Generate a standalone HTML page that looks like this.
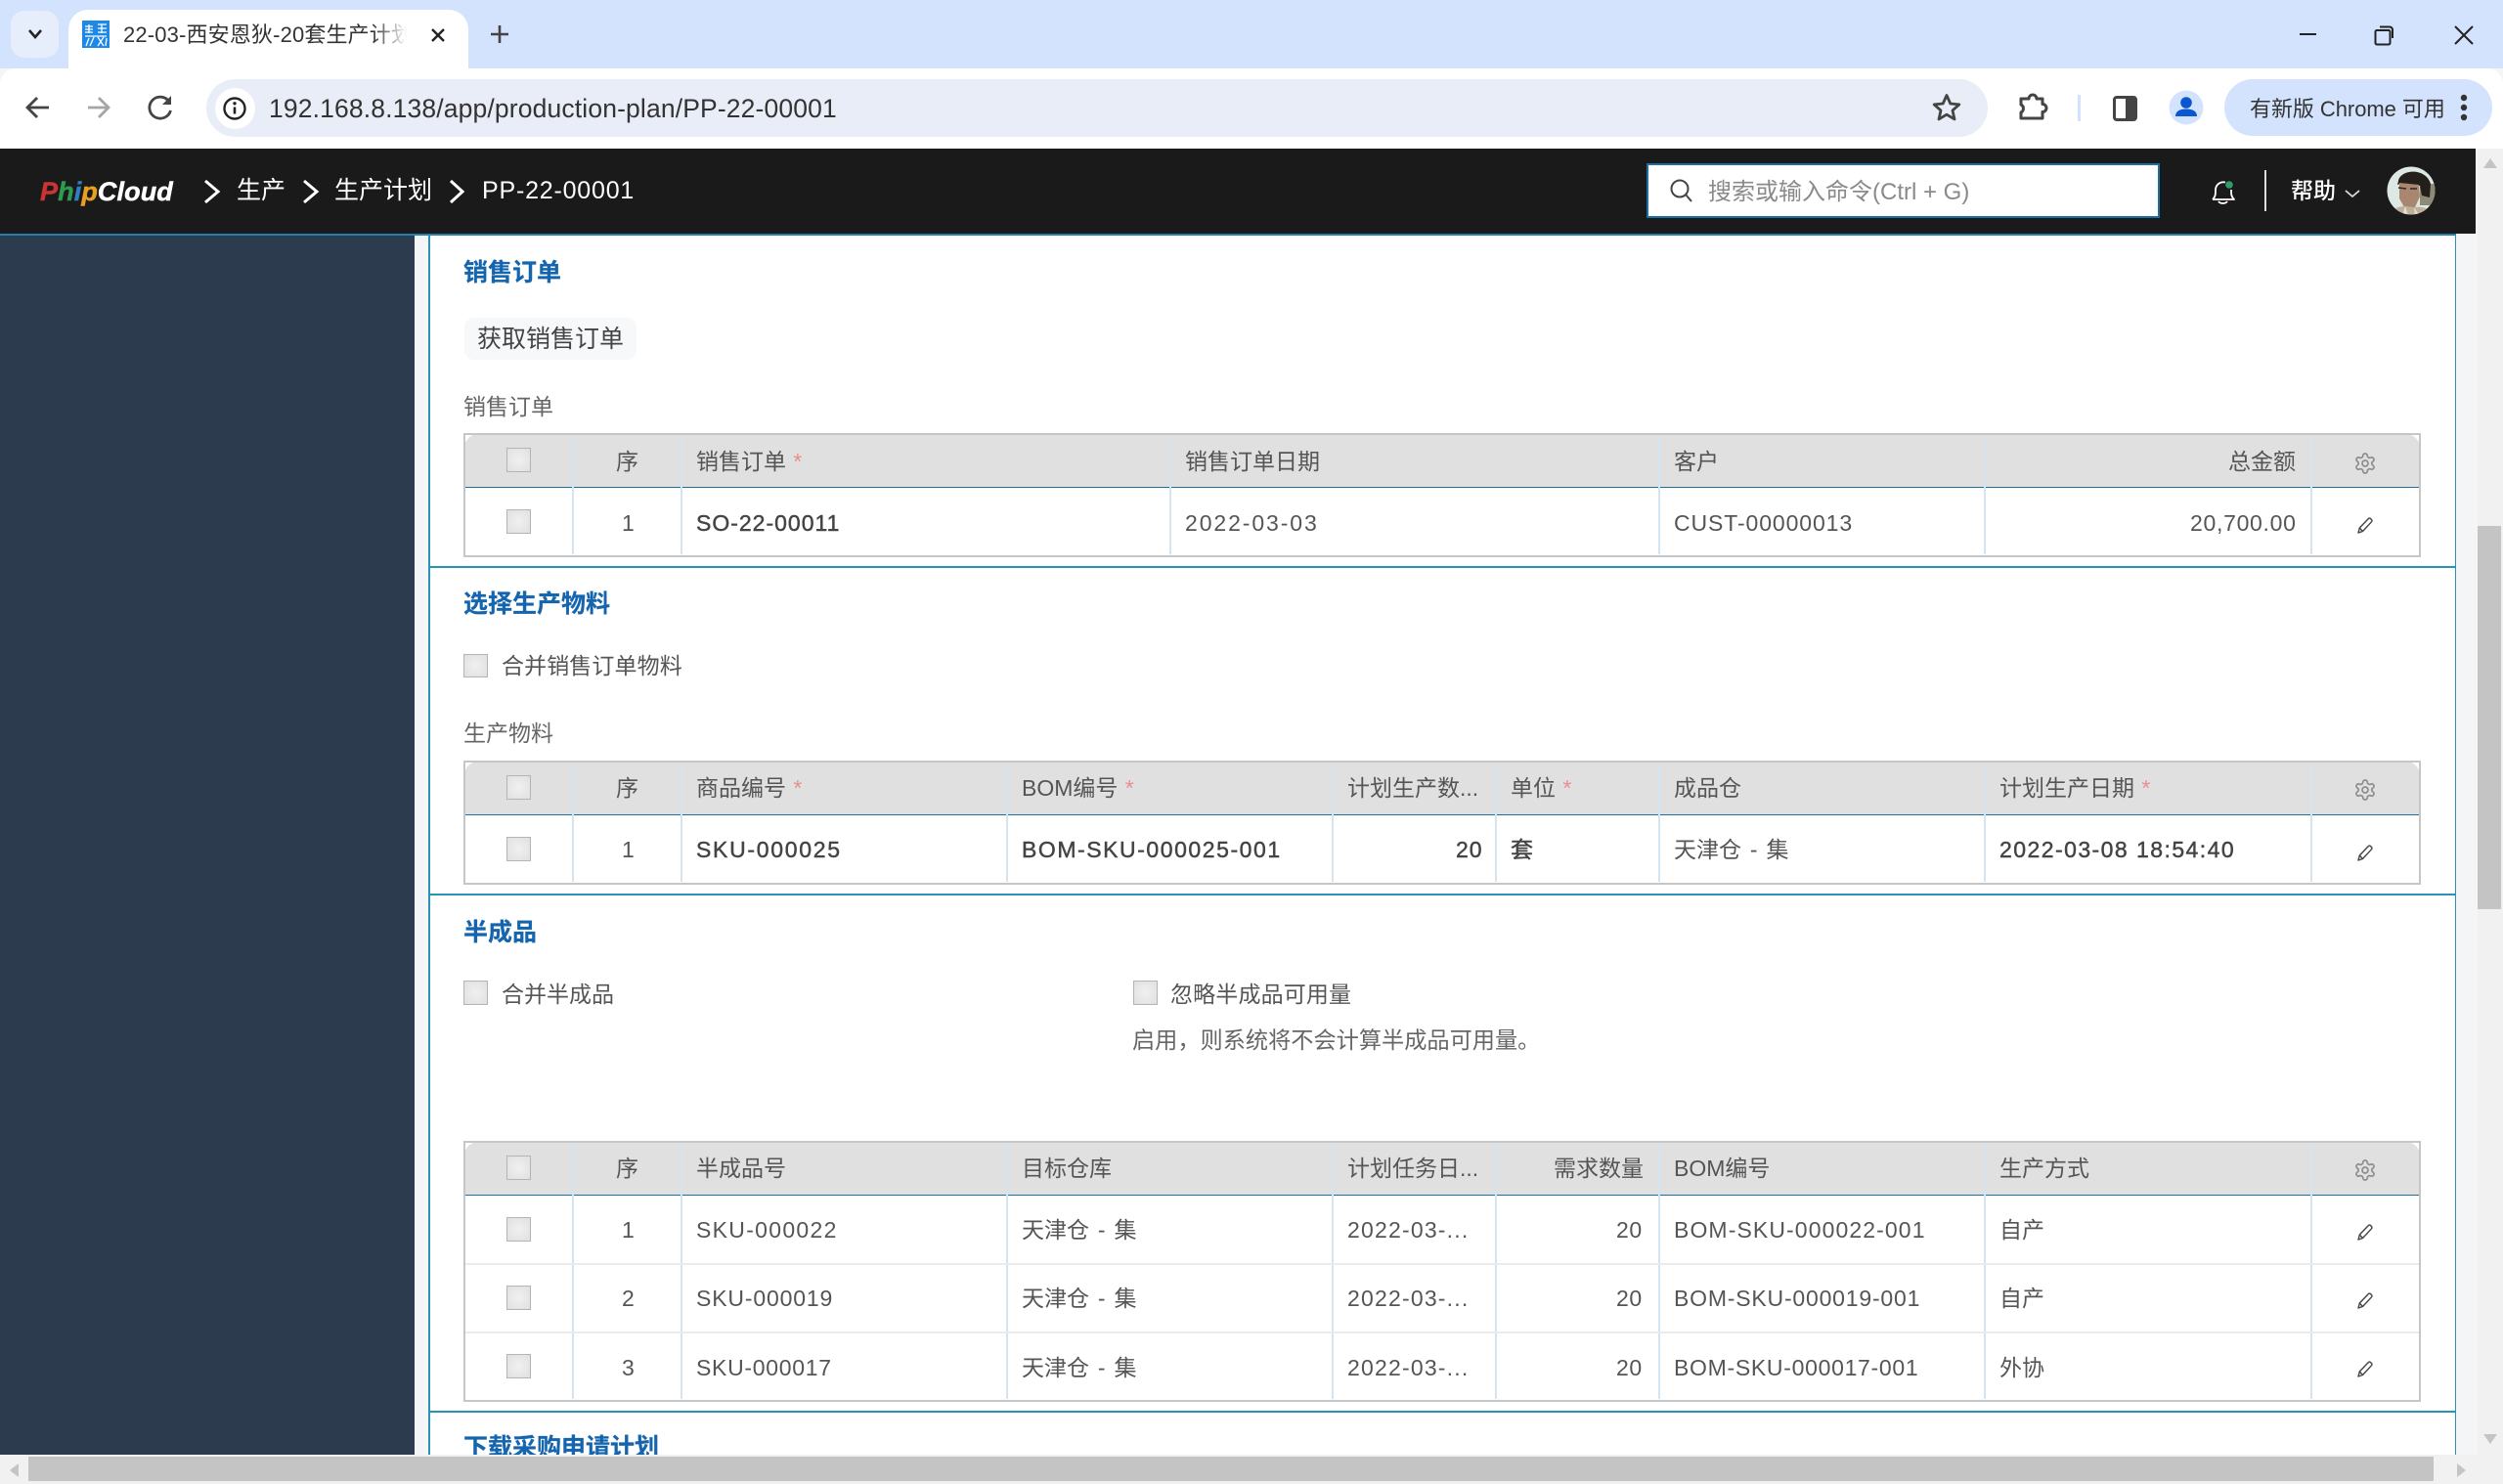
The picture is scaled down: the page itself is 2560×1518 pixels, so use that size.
<!DOCTYPE html>
<html><head><meta charset="utf-8">
<style>
html,body{margin:0;padding:0}
body{width:2560px;height:1518px;position:relative;overflow:hidden;background:#f4f5f6;font-family:"Liberation Sans","Noto Sans CJK SC",sans-serif;color:#555}
div,span,svg{position:absolute}
span{white-space:nowrap}
.ln{height:1.5px;left:438px;width:2074px;background:#2b92b5}
.h{left:474px;font-size:25px;font-weight:700;color:#1565ae;line-height:40px;height:40px;-webkit-text-stroke:.2px #1565ae}
.lb{font-size:23px;color:#666;line-height:40px;height:40px}
.cb{width:25px;height:25px;box-sizing:border-box;border:1.5px solid #b4b4b4;background:radial-gradient(circle,#f0f0f0,#e0e0e0)}
.tb{left:474px;width:2002px}
.tb:after{content:"";position:absolute;left:0;top:0;right:0;bottom:0;border:2px solid #c6c6c6;box-sizing:border-box}
.hd{left:1px;right:1px;top:1px;height:54px;background:#e0e0e0;border-radius:14px 14px 0 0;border-bottom:1.5px solid #1f6f9f}
.v{width:1.5px;top:1px;bottom:3px;background:#d3e4f3}
.r{left:1px;width:2001px;font-size:23px;color:#555;letter-spacing:0}
.r span{top:0}
.rl{left:2px;width:1998px;height:2px;background:#ebebeb}
.l{letter-spacing:1px}
.b{-webkit-text-stroke:.45px #444;color:#444}
.s{color:#e98e8e}
.g{width:24px;height:24px;left:1932px}
.p{width:16px;height:17px;left:1936px}
.ck{left:43px}
.w{word-spacing:2.5px}
</style></head><body>
<svg width="0" height="0" style="position:absolute">
<symbol id="gear" viewBox="0 0 24 24"><path fill="none" stroke="#8d8d8d" stroke-width="1.7" d="M12.22 2h-.44a2 2 0 0 0-2 2v.18a2 2 0 0 1-1 1.73l-.43.25a2 2 0 0 1-2 0l-.15-.08a2 2 0 0 0-2.73.73l-.22.38a2 2 0 0 0 .73 2.73l.15.1a2 2 0 0 1 1 1.72v.51a2 2 0 0 1-1 1.74l-.15.09a2 2 0 0 0-.73 2.73l.22.38a2 2 0 0 0 2.73.73l.15-.08a2 2 0 0 1 2 0l.43.25a2 2 0 0 1 1 1.73V20a2 2 0 0 0 2 2h.44a2 2 0 0 0 2-2v-.18a2 2 0 0 1 1-1.73l.43-.25a2 2 0 0 1 2 0l.15.08a2 2 0 0 0 2.73-.73l.22-.39a2 2 0 0 0-.73-2.73l-.15-.08a2 2 0 0 1-1-1.74v-.5a2 2 0 0 1 1-1.74l.15-.09a2 2 0 0 0 .73-2.73l-.22-.38a2 2 0 0 0-2.73-.73l-.15.08a2 2 0 0 1-2 0l-.43-.25a2 2 0 0 1-1-1.73V4a2 2 0 0 0-2-2z"/><circle cx="12" cy="12" r="3" fill="none" stroke="#8d8d8d" stroke-width="1.7"/></symbol>
<symbol id="pen" viewBox="0 0 16 17"><path fill="none" stroke="#444" stroke-width="1.4" stroke-linejoin="round" d="M1 16L2.3 11 11.3 1.6a1.6 1.6 0 0 1 2.3 0l.9.9a1.6 1.6 0 0 1 0 2.3L5.5 14.5zM2.3 11l3.2 3.5"/></symbol>
</svg>

<!-- chrome tab strip -->
<div style="left:0;top:0;width:2560px;height:70px;background:#d3e3fd"></div>
<div style="left:11px;top:11px;width:49px;height:48px;border-radius:14px;background:#e6eefc"></div>
<svg style="left:28px;top:29px" width="16" height="12"><path d="M2 2l6 7 6-7" fill="none" stroke="#222" stroke-width="2.6"/></svg>
<div style="left:70px;top:10px;width:409px;height:60px;background:#fff;border-radius:20px 20px 0 0"></div>
<div style="left:84px;top:21px;width:28px;height:28px;background:#1e88e5"></div>
<svg style="left:84px;top:21px" width="28" height="28"><path d="M7 4v9M3 6h8M3 9h8M3 12h8M16 4h9M20 4v9M16 8h9M16 12h9M3 16h22M7 18l-3 8M12 17l-4 9M16 17l6 9M22 17l-6 9M25 18l-1 8" fill="none" stroke="#fff" stroke-width="1.3"/></svg>
<span style="left:126px;top:16px;width:290px;height:40px;overflow:hidden;font-size:22px;line-height:40px;color:#333;letter-spacing:.15px;-webkit-mask-image:linear-gradient(90deg,#000 88%,transparent)">22-03-西安恩狄-20套生产计划</span>
<svg style="left:440px;top:28px" width="16" height="16"><path d="M2 2l12 12M14 2L2 14" stroke="#222" stroke-width="2.4"/></svg>
<svg style="left:501px;top:25px" width="20" height="20"><path d="M10 1v18M1 10h18" stroke="#444" stroke-width="2.6"/></svg>
<svg style="left:2350px;top:25px" width="190" height="22"><path d="M2 10h17" stroke="#222" stroke-width="2"/><path d="M81 6h12a1.5 1.5 0 0 1 1.500 1.500V19a1.500 1.500 0 0 1-1.500 1.500H81a1.500 1.500 0 0 1-1.500-1.500V7.500A1.500 1.500 0 0 1 81 6zM84 2.500h10A3 3 0 0 1 97 5.500V14" fill="none" stroke="#222" stroke-width="2"/><path d="M161 2l18 18M179 2l-18 18" stroke="#222" stroke-width="2"/></svg>

<!-- toolbar -->
<div style="left:0;top:70px;width:2560px;height:82px;background:#fff;border-radius:16px 16px 0 0"></div>
<svg style="left:20px;top:92px" width="160" height="36"><path d="M30 18H9M18 8L8 18l10 10" fill="none" stroke="#444" stroke-width="2.800"/><path d="M70 18h21M81 8l10 10-10 10" fill="none" stroke="#a5a5a5" stroke-width="2.800"/><path d="M153 12a11 11 0 1 0 1.500 9" fill="none" stroke="#444" stroke-width="2.800"/><path d="M155 6v9h-9z" fill="#444"/></svg>
<div style="left:211px;top:81px;width:1822px;height:59px;border-radius:30px;background:#e9edf7"></div>
<div style="left:220px;top:90px;width:41px;height:42px;border-radius:50%;background:#fff"></div>
<svg style="left:226px;top:96px" width="30" height="30"><circle cx="14" cy="15" r="10.500" fill="none" stroke="#222" stroke-width="2.400"/><path d="M14 13.500v7" stroke="#222" stroke-width="2.600"/><circle cx="14" cy="9.800" r="1.700" fill="#222"/></svg>
<span style="left:275px;top:91px;font-size:26.500px;line-height:40px;color:#333;letter-spacing:.14px">192.168.8.138/app/production-plan/PP-22-00001</span>
<svg style="left:1975px;top:94px" width="32" height="32"><path d="M16 3.500l3.800 8.500 9 .9-6.800 6 2 9L16 23.200 8 27.900l2-9-6.800-6 9-.9z" fill="none" stroke="#444" stroke-width="2.800" stroke-linejoin="round"/></svg>
<svg style="left:2059px;top:90px" width="40" height="38"><path d="M8 11h8a4 4 0 0 1 8 0h6v5.500a4 4 0 0 1 0 8V31H8v-6a4.500 4.500 0 0 0 0-8z" fill="none" stroke="#444" stroke-width="3" stroke-linejoin="round"/></svg>
<div style="left:2125px;top:97px;width:3px;height:27px;background:#d3e3fd"></div>
<svg style="left:2159px;top:96px" width="30" height="30"><rect x="3.500" y="3.500" width="22" height="23" rx="2.500" fill="none" stroke="#444" stroke-width="3"/><rect x="15" y="3" width="11" height="24" fill="#444"/></svg>
<svg style="left:2218px;top:92px" width="36" height="36"><circle cx="18" cy="18" r="17.500" fill="#d3e3fd"/><circle cx="18" cy="13" r="5.800" fill="#0b57d0"/><path d="M7 27c0-5 4-7.500 11-7.500S29 22 29 27z" fill="#0b57d0"/></svg>
<div style="left:2275px;top:81px;width:274px;height:58px;border-radius:30px;background:#d3e3fd"></div>
<span style="left:2301px;top:92px;font-size:22px;line-height:40px;color:#333;letter-spacing:-.05px">有新版 Chrome 可用</span>
<svg style="left:2514px;top:94px" width="12" height="32"><circle cx="6" cy="6" r="3.200" fill="#333"/><circle cx="6" cy="16" r="3.200" fill="#333"/><circle cx="6" cy="26" r="3.200" fill="#333"/></svg>

<!-- sidebar + page column -->
<div style="left:0;top:240px;width:424px;height:1248px;background:#2c3c4e"></div>
<div style="left:2534px;top:152px;width:26px;height:1336px;background:#f1f1f1"></div>
<div style="left:2534px;top:538px;width:24px;height:392px;background:#c4c4c4"></div>
<svg style="left:2538px;top:160px" width="18" height="14"><path d="M9 2l7 10H2z" fill="#c4c4c4"/></svg>
<svg style="left:2538px;top:1465px" width="18" height="14"><path d="M9 12L2 2h14z" fill="#c4c4c4"/></svg>

<!-- navbar -->
<div style="left:0;top:152px;width:2532px;height:87px;background:#1a1a1a"></div>
<span style="left:41px;top:176px;font-size:27px;line-height:40px;font-weight:700;font-style:italic;color:#fff;-webkit-text-stroke:.5px currentColor;letter-spacing:.1px"><b style="color:#cc3333">P</b><b style="color:#2e9a4d">h</b><b style="color:#2f7fc1">i</b><b style="color:#e8a020">p</b>Cloud</span>
<svg style="left:205px;top:180px" width="270" height="32"><path d="M5 5l13 11L5 27M106 5l13 11-13 11" fill="none" stroke="#fff" stroke-width="3"/><path d="M256 5l12 11-12 11" fill="none" stroke="#fff" stroke-width="3"/></svg>
<span style="left:242px;top:175px;font-size:25px;line-height:40px;color:#fff">生产</span>
<span style="left:342px;top:175px;font-size:25px;line-height:40px;color:#fff">生产计划</span>
<span style="left:493px;top:175px;font-size:25px;line-height:40px;color:#fff;letter-spacing:.8px">PP-22-00001</span>
<div style="left:1684px;top:167px;width:525px;height:56px;box-sizing:border-box;background:#fff;border:2px solid #1b6fa5"></div>
<svg style="left:1706px;top:182px" width="26" height="26"><circle cx="12" cy="11" r="8.500" fill="none" stroke="#444" stroke-width="2"/><path d="M18 17l6 7" stroke="#444" stroke-width="2"/></svg>
<span style="left:1747px;top:177px;font-size:24px;line-height:40px;color:#8a8a8a">搜索或输入命令(Ctrl + G)</span>
<svg style="left:2260px;top:181px" width="28" height="30"><path d="M3 23c3-3 3-5 3-10a8 8 0 0 1 10-7.500M22 13c0 5 0 7 3 10H3M9 25a5 3.500 0 0 0 9 0" fill="none" stroke="#fff" stroke-width="1.800" stroke-linejoin="round"/><circle cx="20" cy="8" r="3.800" fill="#2e9e6a"/></svg>
<div style="left:2316px;top:174px;width:1.5px;height:42px;background:#ddd"></div>
<span style="left:2343px;top:175px;font-size:23px;line-height:40px;color:#fff;font-weight:500">帮助</span>
<svg style="left:2397px;top:193px" width="18" height="10"><path d="M2 2l7 6 7-6" fill="none" stroke="#ddd" stroke-width="1.800"/></svg>
<svg style="left:2441px;top:170px" width="50" height="50"><defs><clipPath id="av"><circle cx="25" cy="25" r="24.500"/></clipPath></defs><g clip-path="url(#av)"><rect width="50" height="50" fill="#dde8e2"/><rect x="34" y="18" width="16" height="22" fill="#8d8a78"/><path d="M12 15C14 3 40 1 45 18l-1 14-8-2-2-10-20-2-3 1z" fill="#23201c"/><path d="M13 17l20 2 1 12-5 11H18l-5-9z" fill="#a98670"/><path d="M12 22l8 1M24 23l7 0" stroke="#33261f" stroke-width="1.500"/><path d="M2 50c2-7 12-9 17-9l10 1c7-1 18 2 20 8z" fill="#bdb19a"/><path d="M28 42l5 8h-4zM19 41l3 9h-6z" fill="#e4ded0"/></g></svg>

<!-- form card -->
<div style="left:438px;top:240px;width:2074px;height:1248px;background:#fff"></div>
<div style="left:0;top:239px;width:2512px;height:1.5px;background:#1f7fae"></div>
<div style="left:438px;top:240px;width:1.5px;height:1248px;background:#2b92b5"></div>
<div style="left:2510.500px;top:240px;width:1.5px;height:1248px;background:#2b92b5"></div>
<div class="ln" style="top:579px"></div>
<div class="ln" style="top:914px"></div>
<div class="ln" style="top:1443px"></div>

<span class="h" style="top:259px">销售订单</span>
<div style="left:475px;top:325px;width:176px;height:43px;border-radius:10px;background:#f6f8fa"></div>
<span style="left:488px;top:327px;font-size:25px;line-height:40px;color:#444">获取销售订单</span>
<span class="lb" style="left:474px;top:396px">销售订单</span>

<div class="tb" style="top:443px;height:127px">
 <div class="hd"></div>
 <div class="v" style="left:111px"></div><div class="v" style="left:222px"></div><div class="v" style="left:722px"></div><div class="v" style="left:1222px"></div><div class="v" style="left:1555px"></div><div class="v" style="left:1889px"></div>
 <div class="r" style="top:0;height:56px;line-height:58px">
  <div class="cb ck" style="top:15px"></div><span style="left:155px">序</span><span style="left:237px">销售订单 <i class="s">*</i></span><span style="left:737px">销售订单日期</span><span style="left:1237px">客户</span><span style="left:1804px;">总金额</span>
  <svg class="g" style="top:19px"><use href="#gear"/></svg>
 </div>
 <div class="r" style="top:56px;height:70px;line-height:72px">
  <div class="cb ck" style="top:22px"></div><span style="left:161px" >1</span><span class="l b" style="left:237px;letter-spacing:1px">SO-22-00011</span><span class="l" style="left:737px;letter-spacing:1.9px">2022-03-03</span><span class="l" style="left:1237px;letter-spacing:.9px">CUST-00000013</span><span class="l" style="left:1765px;letter-spacing:.7px">20,700.00</span>
  <svg class="p" style="top:30px"><use href="#pen"/></svg>
 </div>
</div>

<span class="h" style="top:598px">选择生产物料</span>
<div class="cb" style="left:474px;top:669px;height:24px"></div>
<span class="lb" style="left:513px;top:661px;color:#555;letter-spacing:.1px">合并销售订单物料</span>
<span class="lb" style="left:474px;top:730px">生产物料</span>

<div class="tb" style="top:778px;height:127px">
 <div class="hd"></div>
 <div class="v" style="left:111px"></div><div class="v" style="left:222px"></div><div class="v" style="left:555px"></div><div class="v" style="left:888px"></div><div class="v" style="left:1055px"></div><div class="v" style="left:1222px"></div><div class="v" style="left:1555px"></div><div class="v" style="left:1889px"></div>
 <div class="r" style="top:0;height:56px;line-height:57px">
  <div class="cb ck" style="top:15px"></div><span style="left:155px">序</span><span style="left:237px">商品编号 <i class="s">*</i></span><span style="left:570px">BOM编号 <i class="s">*</i></span><span style="left:903px">计划生产数...</span><span style="left:1070px">单位 <i class="s">*</i></span><span style="left:1237px">成品仓</span><span style="left:1570px">计划生产日期 <i class="s">*</i></span>
  <svg class="g" style="top:18px"><use href="#gear"/></svg>
 </div>
 <div class="r" style="top:56px;height:70px;line-height:71px">
  <div class="cb ck" style="top:22px"></div><span style="left:161px">1</span><span class="l b" style="left:237px;letter-spacing:1.7px">SKU-000025</span><span class="l b" style="left:570px;letter-spacing:1.55px">BOM-SKU-000025-001</span><span class="l b" style="left:1014px;letter-spacing:.9px">20</span><span class="b" style="left:1070px">套</span><span class="w" style="left:1237px">天津仓 - 集</span><span class="l b" style="left:1570px;letter-spacing:1.45px">2022-03-08 18:54:40</span>
  <svg class="p" style="top:30px"><use href="#pen"/></svg>
 </div>
</div>

<span class="h" style="top:934px">半成品</span>
<div class="cb" style="left:474px;top:1003px"></div>
<span class="lb" style="left:513px;top:997px;color:#555">合并半成品</span>
<div class="cb" style="left:1159px;top:1003px"></div>
<span class="lb" style="left:1197px;top:997px;color:#555;letter-spacing:.15px">忽略半成品可用量</span>
<span class="lb" style="left:1158px;top:1044px;font-size:23.200px">启用，则系统将不会计算半成品可用量。</span>

<div class="tb" style="top:1167px;height:267px">
 <div class="hd"></div>
 <div class="v" style="left:111px"></div><div class="v" style="left:222px"></div><div class="v" style="left:555px"></div><div class="v" style="left:888px"></div><div class="v" style="left:1055px"></div><div class="v" style="left:1222px"></div><div class="v" style="left:1555px"></div><div class="v" style="left:1889px"></div>
 <div class="rl" style="top:125px"></div><div class="rl" style="top:195px"></div>
 <div class="r" style="top:0;height:56px;line-height:56px">
  <div class="cb ck" style="top:15px"></div><span style="left:155px">序</span><span style="left:237px">半成品号</span><span style="left:570px">目标仓库</span><span style="left:903px">计划任务日...</span><span style="left:1114px">需求数量</span><span style="left:1237px">BOM编号</span><span style="left:1570px">生产方式</span>
  <svg class="g" style="top:18px"><use href="#gear"/></svg>
 </div>
 <div class="r" style="top:56px;height:70px;line-height:70px">
  <div class="cb ck" style="top:22px"></div><span style="left:161px">1</span><span class="l" style="left:237px;letter-spacing:1.3px">SKU-000022</span><span class="w" style="left:570px">天津仓 - 集</span><span class="l" style="left:903px;letter-spacing:1.2px">2022-03-...</span><span class="l" style="left:1178px;letter-spacing:.6px">20</span><span class="l" style="left:1237px;letter-spacing:1.1px">BOM-SKU-000022-001</span><span style="left:1570px">自产</span>
  <svg class="p" style="top:29px"><use href="#pen"/></svg>
 </div>
 <div class="r" style="top:126px;height:70px;line-height:70px">
  <div class="cb ck" style="top:22px"></div><span style="left:161px">2</span><span class="l" style="left:237px;letter-spacing:.85px">SKU-000019</span><span class="w" style="left:570px">天津仓 - 集</span><span class="l" style="left:903px;letter-spacing:1.2px">2022-03-...</span><span class="l" style="left:1178px;letter-spacing:.6px">20</span><span class="l" style="left:1237px;letter-spacing:.8px">BOM-SKU-000019-001</span><span style="left:1570px">自产</span>
  <svg class="p" style="top:29px"><use href="#pen"/></svg>
 </div>
 <div class="r" style="top:196px;height:70px;line-height:72px">
  <div class="cb ck" style="top:22px"></div><span style="left:161px">3</span><span class="l" style="left:237px;letter-spacing:.7px">SKU-000017</span><span class="w" style="left:570px">天津仓 - 集</span><span class="l" style="left:903px;letter-spacing:1.2px">2022-03-...</span><span class="l" style="left:1178px;letter-spacing:.6px">20</span><span class="l" style="left:1237px;letter-spacing:.7px">BOM-SKU-000017-001</span><span style="left:1570px">外协</span>
  <svg class="p" style="top:29px"><use href="#pen"/></svg>
 </div>
</div>

<span class="h" style="top:1461px">下载采购申请计划</span>

<!-- horizontal scrollbar -->
<div style="left:0;top:1488px;width:2560px;height:30px;background:#f1f1f1"></div>
<div style="left:29px;top:1490px;width:2460px;height:25px;background:#c4c4c4"></div>
<svg style="left:8px;top:1495px" width="14" height="18"><path d="M2 9l9-7v14z" fill="#c4c4c4"/></svg>
<svg style="left:2510px;top:1495px" width="14" height="18"><path d="M12 9L3 2v14z" fill="#c4c4c4"/></svg>
</body></html>
